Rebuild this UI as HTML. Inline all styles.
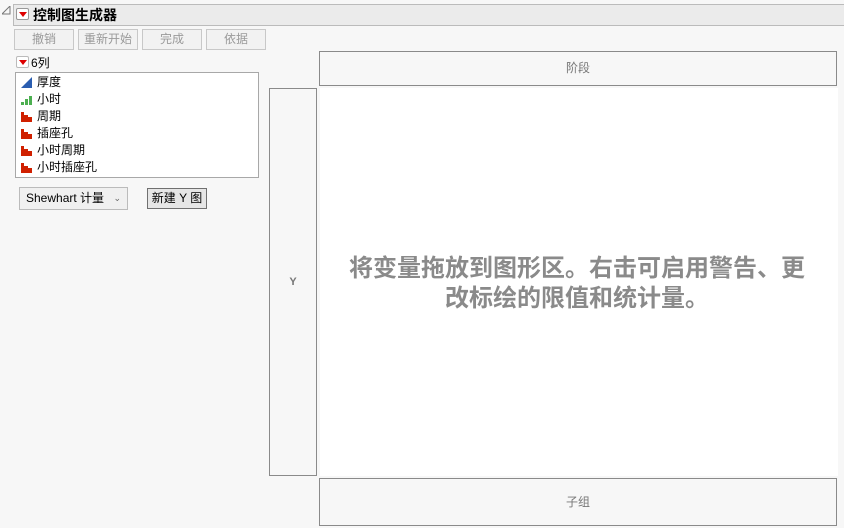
<!DOCTYPE html>
<html><head><meta charset="utf-8"><style>
*{margin:0;padding:0;box-sizing:border-box}
body{width:844px;height:528px;background:#f7f7f7;position:relative;overflow:hidden;font-family:"Liberation Sans","Noto Sans CJK SC",sans-serif;font-size:12px;color:#000}
.a{position:absolute}
.hdr{left:13px;top:4px;width:831px;height:22px;background:#ebebeb;border-top:1px solid #bbb;border-bottom:1px solid #bbb;border-left:1px solid #bbb}
.rt{position:absolute;width:13px;height:12px;border:1px solid #999;border-radius:2px;background:#fff}
.rt:after{content:"";position:absolute;left:2px;top:3px;border-left:4px solid transparent;border-right:4px solid transparent;border-top:5px solid #d00}
.btn{top:29px;height:21px;border:1px solid #c8c8c8;background:#f2f2f2;color:#9a9a9a;font-size:12px;text-align:center;line-height:19px}
.list{left:15px;top:72px;width:244px;height:106px;background:#fff;border:1px solid #a8a8a8}
.it{position:absolute;left:4px;height:17px;line-height:17px;font-size:12px}
.it span{position:absolute;left:17px;white-space:nowrap}
.zone{background:#f7f7f7;border:1px solid #8a8a8a;color:#777;font-size:12px;text-align:center}
</style></head><body>
<svg class="a" style="left:2px;top:6px" width="9" height="9"><path d="M8 0 L8 8 L0 8 Z" fill="none" stroke="#777" stroke-width="1"/></svg>
<div class="a hdr"></div>
<div class="rt" style="left:16px;top:8px"></div>
<div class="a" style="left:33px;top:5px;font-size:14px;font-weight:bold;line-height:20px">控制图生成器</div>
<div class="a btn" style="left:14px;width:60px">撤销</div>
<div class="a btn" style="left:78px;width:60px">重新开始</div>
<div class="a btn" style="left:142px;width:60px">完成</div>
<div class="a btn" style="left:206px;width:60px">依据</div>
<div class="rt" style="left:16px;top:56px;border-color:#bbb"></div>
<div class="a" style="left:31px;top:56px;line-height:14px">6列</div>
<div class="a list">
<div class="it" style="top:1px"><svg width="14" height="14" style="position:absolute;top:2px"><path d="M1 12 L12 1 L12 12 Z" fill="#2a5db0"/></svg><span>厚度</span></div>
<div class="it" style="top:18px"><svg width="14" height="14" style="position:absolute;top:2px"><rect x="1" y="9" width="3" height="3" fill="#4caf50"/><rect x="5" y="6" width="3" height="6" fill="#4caf50"/><rect x="9" y="3" width="3" height="9" fill="#4caf50"/></svg><span>小时</span></div>
<div class="it" style="top:35px"><svg width="14" height="14" style="position:absolute;top:2px"><rect x="1" y="2" width="3" height="10" fill="#d02000"/><rect x="4" y="5" width="4" height="7" fill="#d02000"/><rect x="8" y="7" width="4" height="5" fill="#d02000"/></svg><span>周期</span></div>
<div class="it" style="top:52px"><svg width="14" height="14" style="position:absolute;top:2px"><rect x="1" y="2" width="3" height="10" fill="#d02000"/><rect x="4" y="5" width="4" height="7" fill="#d02000"/><rect x="8" y="7" width="4" height="5" fill="#d02000"/></svg><span>插座孔</span></div>
<div class="it" style="top:69px"><svg width="14" height="14" style="position:absolute;top:2px"><rect x="1" y="2" width="3" height="10" fill="#d02000"/><rect x="4" y="5" width="4" height="7" fill="#d02000"/><rect x="8" y="7" width="4" height="5" fill="#d02000"/></svg><span>小时周期</span></div>
<div class="it" style="top:86px"><svg width="14" height="14" style="position:absolute;top:2px"><rect x="1" y="2" width="3" height="10" fill="#d02000"/><rect x="4" y="5" width="4" height="7" fill="#d02000"/><rect x="8" y="7" width="4" height="5" fill="#d02000"/></svg><span>小时插座孔</span></div>
</div>
<div class="a" style="left:19px;top:187px;width:109px;height:23px;border:1px solid #bbb;background:#f0f0f0;line-height:21px;padding-left:6px">Shewhart 计量<span style="position:absolute;right:6px;font-size:9px;color:#666">&#8964;</span></div>
<div class="a" style="left:147px;top:188px;width:60px;height:21px;border:1px solid #707070;background:#e6e6e6;line-height:19px;text-align:center">新建 Y 图</div>
<div class="a zone" style="left:319px;top:51px;width:518px;height:35px;line-height:33px">阶段</div>
<div class="a zone" style="left:269px;top:88px;width:48px;height:388px;line-height:386px;font-weight:bold;font-size:11px">Y</div>
<div class="a" style="left:320px;top:88px;width:518px;height:388px;background:#fff"></div>
<div class="a" style="left:318px;top:254px;width:518px;text-align:center;font-size:24px;font-weight:bold;color:#8a8a8a;line-height:30px">将变量拖放到图形区。右击可启用警告、更<br>改标绘的限值和统计量。</div>
<div class="a zone" style="left:319px;top:478px;width:518px;height:48px;line-height:46px">子组</div>
</body></html>
